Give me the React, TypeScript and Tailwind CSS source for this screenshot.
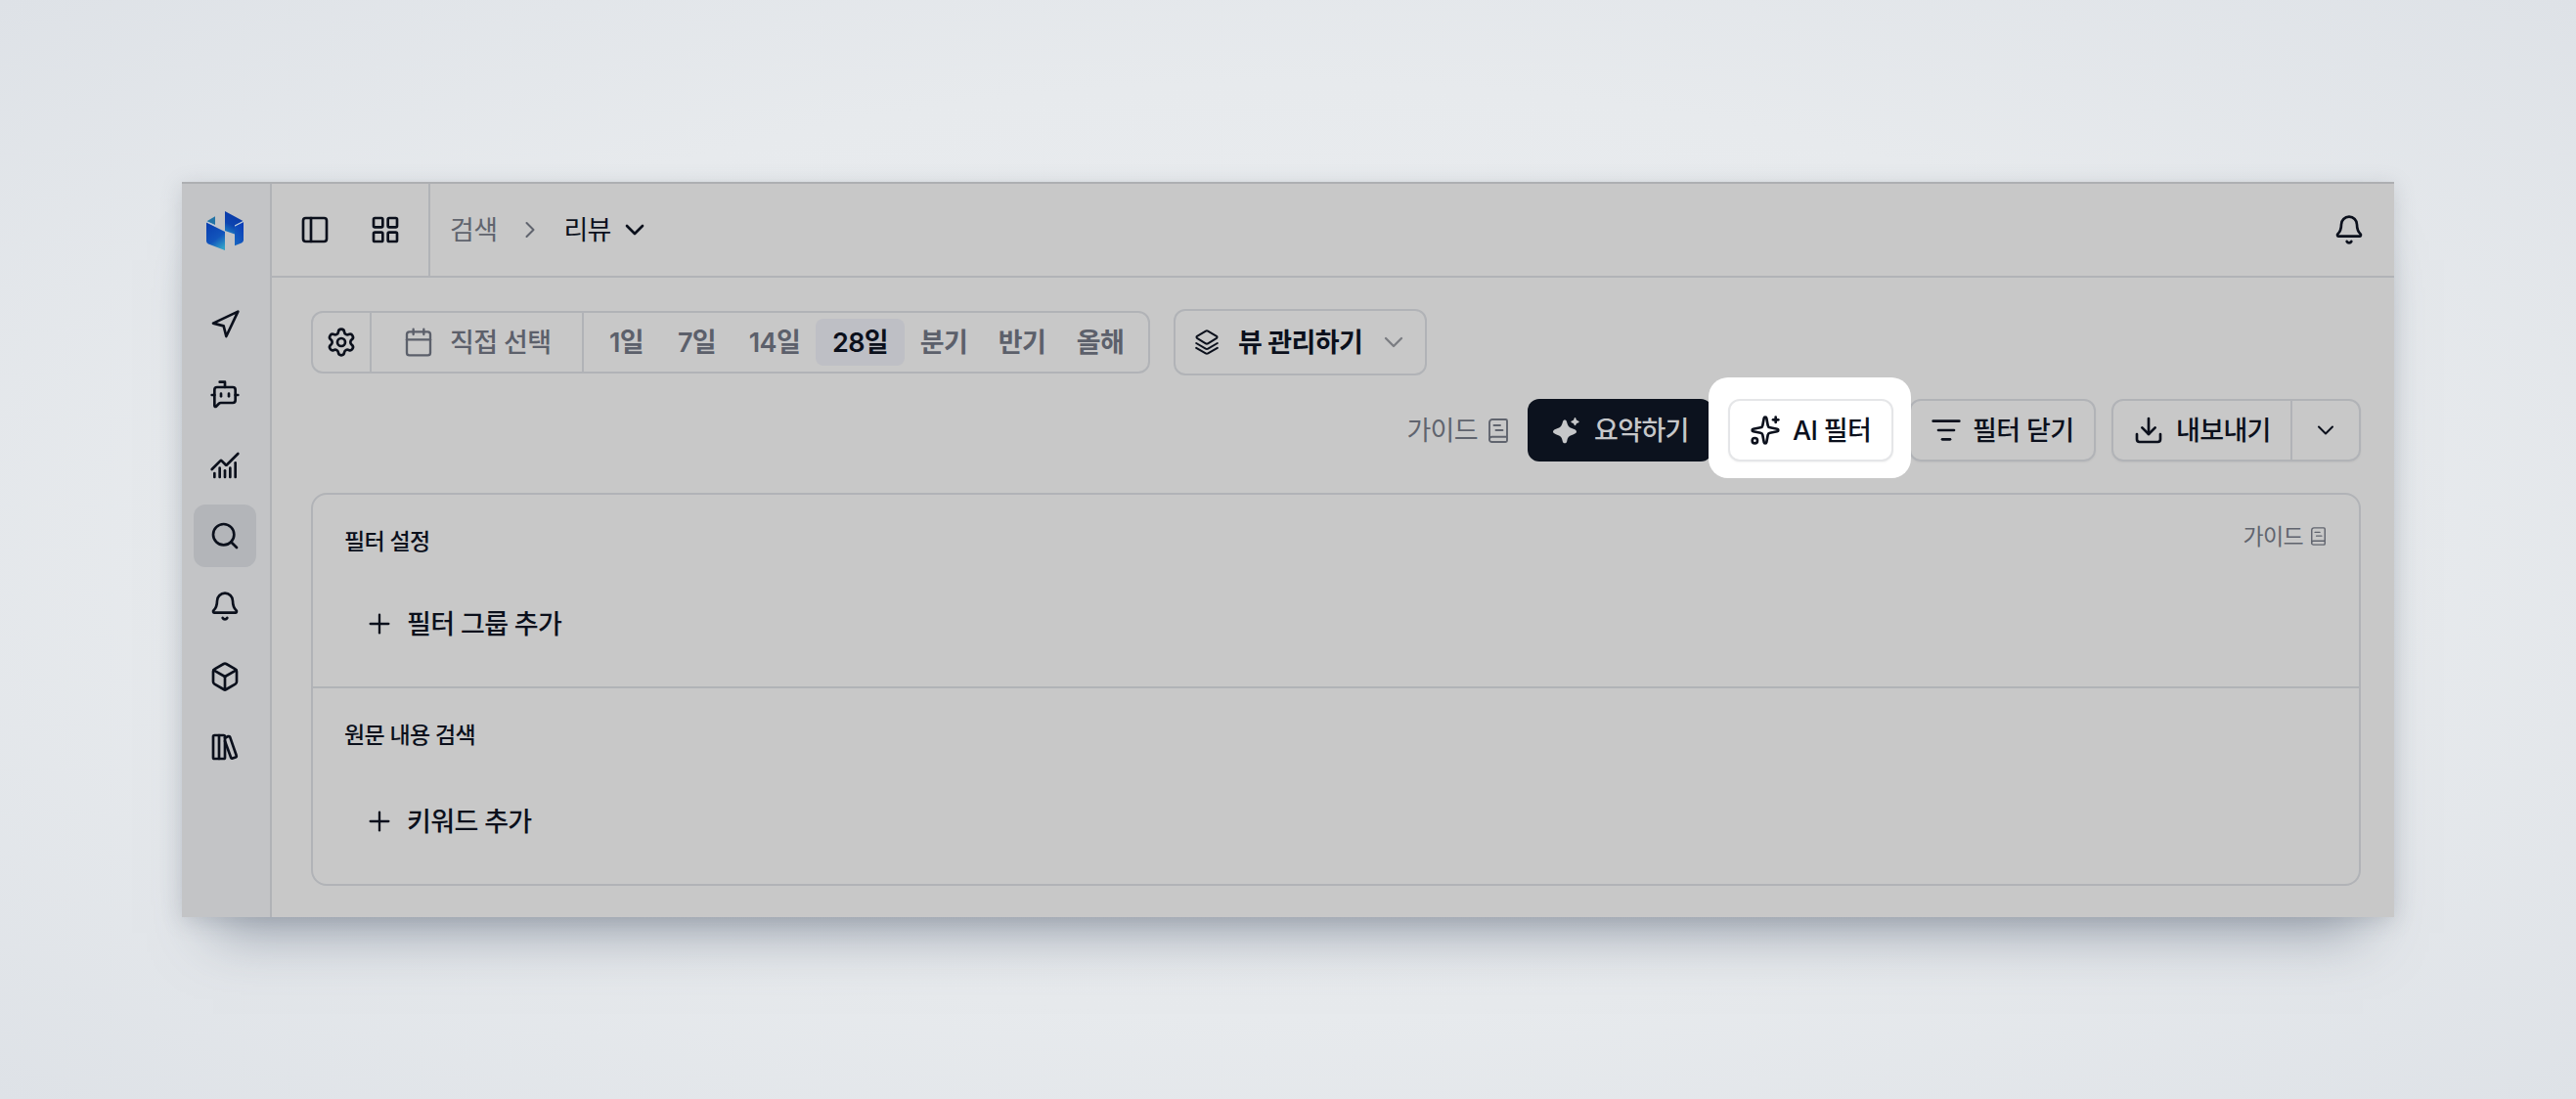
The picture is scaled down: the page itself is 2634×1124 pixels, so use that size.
import {
  Bell,
  BotMessageSquare,
  Box,
  Calendar,
  ChartNoAxesCombined,
  ChevronDown,
  ChevronRight,
  Download,
  LayoutGrid,
  ListFilter,
  Navigation,
  PanelLeft,
  Plus,
  Search,
  Settings,
  Sparkles,
} from "lucide-react";

const Logo = () => (
  <svg width="40" height="40" viewBox="0 0 40 40" fill="none">
    <defs>
      <linearGradient id="front" x1="0.2" y1="0" x2="0.7" y2="1">
        <stop offset="0" stopColor="#0a3fb0" />
        <stop offset="0.6" stopColor="#1255bc" />
        <stop offset="1" stopColor="#2f9fc8" />
      </linearGradient>
      <linearGradient id="back" x1="0.6" y1="0" x2="0.2" y2="1">
        <stop offset="0" stopColor="#0838a6" />
        <stop offset="0.6" stopColor="#0d44b0" />
        <stop offset="1" stopColor="#1e80c4" />
      </linearGradient>
      <linearGradient id="side" x1="0.8" y1="0" x2="0.2" y2="1">
        <stop offset="0" stopColor="#0a3cb8" />
        <stop offset="1" stopColor="#1664c0" />
      </linearGradient>
    </defs>
    <path d="M1.5 10.2 10 5.2V14L1.5 10.2Z" fill="#2474a6" />
    <path d="M20 0 38.5 10 30 14.5V23.5L20 20Z" fill="url(#back)" />
    <path d="M1 11.5 20 21V40L3 33.5Q1 32.6 1 30.5Z" fill="url(#front)" />
    <path d="M30 15.5 39 11V29.5Q39 31.5 37 32.5L30 35.3Z" fill="url(#side)" />
    <path d="M1 10.6 10 15M30 15 38.8 10.6" stroke="#b5cbe4" strokeWidth="1" />
  </svg>
);

const BooksIcon = () => (
  <svg width="32" height="32" viewBox="0 0 24 24" fill="none" stroke="currentColor" strokeWidth="2" strokeLinecap="round" strokeLinejoin="round">
    <path d="M3 4a1 1 0 0 1 1-1h7a1 1 0 0 1 1 1v16a1 1 0 0 1-1 1H4a1 1 0 0 1-1-1Z" />
    <path d="M7.5 3v18" />
    <path d="m12 5 2.6-1.2a1 1 0 0 1 1.3.6l4.9 14.2a1 1 0 0 1-.6 1.3l-2.3.8a1 1 0 0 1-1.3-.6L12 7.5" />
  </svg>
);

const LayersIcon = () => (
  <svg width="24" height="26" viewBox="0 0 24 26" fill="none" stroke="currentColor" strokeWidth="2" strokeLinecap="round" strokeLinejoin="round">
    <path d="M10.9 1.6a2.2 2.2 0 0 1 2.2 0l8.9 5.2a1.2 1.2 0 0 1 0 2l-8.9 5.5a2.2 2.2 0 0 1-2.2 0L2 8.8a1.2 1.2 0 0 1 0-2Z" />
    <path d="m1.2 14 9.6 5.6a2.4 2.4 0 0 0 2.4 0l9.6-5.6" />
    <path d="m1.2 18.8 9.6 5.6a2.4 2.4 0 0 0 2.4 0l9.6-5.6" />
  </svg>
);

const BookIcon = ({ className }: any) => (
  <svg className={className} viewBox="0 0 20 25" fill="none" stroke="currentColor" strokeWidth="1.9" strokeLinecap="round" strokeLinejoin="round">
    <path d="M1 21.5V4a3 3 0 0 1 3-3h13.5a1.5 1.5 0 0 1 1.5 1.5v20a1.5 1.5 0 0 1-1.5 1.5H3.5a2.5 2.5 0 0 1 0-5.2H19" />
    <path d="M5.5 7h6.5M7.5 12h7" />
  </svg>
);

const SparkleIcon = () => (
  <svg width="27" height="27" viewBox="0 0 27 27" fill="currentColor">
    <path d="M12 2.5c1 0 1.7.7 2 1.7 1.3 4.6 1.6 5.5 7 7.6 4 1.5 4 3.9 0 5.4-5.4 2-5.7 2.5-6.8 7.2-.6 2.6-3.8 2.6-4.4 0C8.7 19.7 8.4 19.2 3 17.2c-4-1.5-4-3.9 0-5.4 5.4-2.1 5.7-3 7-7.6.3-1 1-1.7 2-1.7Z" />
    <path d="M22.5 0c.8 0 1.2 2.3 1.7 2.8s2.5.8 2.5 1.6-2 1.1-2.5 1.6-.9 2.3-1.7 2.3-1.2-1.8-1.7-2.3-2.5-.8-2.5-1.6 2-1.1 2.5-1.6S21.7 0 22.5 0Z" />
  </svg>
);

// hangul sits a little high in the line box, so push it down
const Label = ({ children, className = "" }: any) => (
  <span className={`pt-0.5 ${className}`}>{children}</span>
);

const navItems = [
  { icon: Navigation, active: false },
  { icon: BotMessageSquare, active: false },
  { icon: ChartNoAxesCombined, active: false },
  { icon: Search, active: true },
  { icon: Bell, active: false },
  { icon: Box, active: false },
  { icon: BooksIcon, active: false },
];

const periods = [
  { label: "1일", width: "w-[69px]" },
  { label: "7일", width: "w-[75px]" },
  { label: "14일", width: "w-[84px]" },
  { label: "28일", width: "w-[91px] rounded-lg bg-[#bebfc5] text-[#0b101c]" },
  { label: "분기", width: "w-20" },
  { label: "반기", width: "w-20" },
  { label: "올해", width: "w-20" },
];

const Sidebar = () => (
  <aside className="flex w-[92px] shrink-0 flex-col border-r-2 border-[#b1b3b7] bg-[#c3c4c6] pl-3">
    <div className="flex h-28 items-start pt-7 pl-3">
      <Logo />
    </div>
    <nav className="flex flex-col gap-2">
      {navItems.map(({ icon: Icon, active }, i) => (
        <a
          key={i}
          className={`flex size-16 items-center justify-center rounded-xl ${active ? "bg-[#b3b5b9]" : ""}`}
        >
          <Icon size={32} />
        </a>
      ))}
    </nav>
  </aside>
);

const Header = () => (
  <header className="flex h-24 items-center border-b-2 border-[#b1b3b7]">
    <div className="flex h-full w-[162px] items-center gap-10 border-r-2 border-[#b1b3b7] pl-7">
      <PanelLeft size={32} />
      <LayoutGrid size={32} />
    </div>
    <div className="flex items-center gap-5 pl-5">
      <Label className="text-[#60646e]">검색</Label>
      <ChevronRight size={28} strokeWidth={1.75} className="text-[#60646e]" />
      <div className="flex items-center gap-2">
        <Label>리뷰</Label>
        <ChevronDown size={32} />
      </div>
    </div>
    <Bell size={32} className="mr-[30px] ml-auto" />
  </header>
);

const DateFilter = () => (
  <div className="flex h-16 w-[858px] rounded-xl border-2 border-[#b1b3b7] font-semibold text-[#5c606b]">
    <div className="flex w-[60px] items-center justify-center border-r-2 border-[#b1b3b7] text-[#0b101c]">
      <Settings size={32} />
    </div>
    <div className="flex w-[217px] items-center gap-4 border-r-2 border-[#b1b3b7] pl-8 font-medium">
      <Calendar size={32} strokeWidth={1.75} />
      <Label>직접 선택</Label>
    </div>
    <div className="flex flex-1 items-center justify-center">
      {periods.map((p) => (
        <div key={p.label} className={`flex h-12 items-center justify-center pt-0.5 ${p.width}`}>
          {p.label}
        </div>
      ))}
    </div>
  </div>
);

export default function App() {
  return (
    <div className="h-[1124px] w-[2634px] bg-[radial-gradient(ellipse_at_center,#eceef1_0%,#e7eaed_60%,#dee2e7_100%)] px-[186px] pt-[186px] font-['Inter','Noto_Sans_CJK_KR',sans-serif] text-[27px] leading-10 tracking-[-0.024em] whitespace-nowrap text-[#0b101c]">
      <div className="flex h-[752px] w-full border-t-2 border-[#adafb2] bg-[#c8c8c8] shadow-[0_4px_20px_rgba(90,98,115,0.22),0_48px_56px_-32px_rgba(85,98,118,0.5)]">
        <Sidebar />
        <div className="flex flex-1 flex-col">
          <Header />
          <main className="flex flex-col pt-8 pr-[34px] pl-10">
            <div className="flex items-center gap-6">
              <DateFilter />
              <button className="flex h-[68px] w-[259px] items-center rounded-xl border-2 border-[#b1b3b7] pl-5 font-semibold">
                <LayersIcon />
                <Label className="ml-5">뷰 관리하기</Label>
                <ChevronDown size={32} strokeWidth={1.75} className="ml-4 text-[#7b7d82]" />
              </button>
            </div>

            <div className="mt-6 flex h-16 items-center justify-end gap-4 font-medium">
              <a className="mr-1 flex items-center gap-[11px] font-normal text-[#60646e]">
                <Label>가이드</Label>
                <BookIcon className="h-[25px] w-5" />
              </a>
              <button className="flex h-full w-[189px] items-center gap-[15px] rounded-xl bg-[#0c121e] pl-[26px] text-[#c6c7c9]">
                <SparkleIcon />
                <Label>요약하기</Label>
              </button>
              <div className="relative h-full">
                {/* spotlight behind the AI filter button */}
                <div className="absolute -top-[22px] -right-[18px] -bottom-[17px] -left-5 z-10 rounded-[20px] bg-white" />
                <button className="relative z-20 flex h-full w-[169px] items-center gap-3 rounded-xl border-2 border-[#e5e6e8] bg-white pl-5 shadow-xs">
                  <Sparkles size={32} />
                  <Label>AI 필터</Label>
                </button>
              </div>
              <button className="flex h-full w-[191px] items-center gap-[11px] rounded-xl border-2 border-[#b1b3b7] pl-5 shadow-xs">
                <ListFilter size={32} />
                <Label>필터 닫기</Label>
              </button>
              <div className="flex h-full w-[255px] rounded-xl border-2 border-[#b1b3b7] shadow-xs">
                <button className="flex flex-1 items-center gap-3 border-r-2 border-[#b1b3b7] pl-5">
                  <Download size={32} />
                  <Label>내보내기</Label>
                </button>
                <button className="flex w-[68px] items-center justify-center">
                  <ChevronDown size={28} strokeWidth={1.75} />
                </button>
              </div>
            </div>

            <section className="mt-8 flex h-[402px] flex-col rounded-2xl border-2 border-[#b1b3b7] font-medium">
              <div className="h-[198px] border-b-2 border-[#b1b3b7] px-8 pt-8">
                <div className="flex justify-between text-[23px] leading-8">
                  <h2>필터 설정</h2>
                  <a className="mr-0.5 flex h-5 items-center gap-2 font-normal text-[#60646e]">
                    <Label>가이드</Label>
                    <BookIcon className="h-[19px] w-[15px]" />
                  </a>
                </div>
                <button className="mt-9 flex h-16 items-center gap-3 pl-5">
                  <Plus size={32} strokeWidth={1.75} />
                  <Label>필터 그룹 추가</Label>
                </button>
              </div>
              <div className="flex-1 px-8 pt-8">
                <h2 className="text-[23px] leading-8">원문 내용 검색</h2>
                <button className="mt-10 flex h-16 items-center gap-3 pl-5">
                  <Plus size={32} strokeWidth={1.75} />
                  <Label>키워드 추가</Label>
                </button>
              </div>
            </section>
          </main>
        </div>
      </div>
    </div>
  );
}
